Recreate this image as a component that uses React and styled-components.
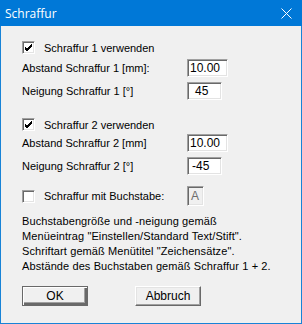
import React from "react";
import styled, { createGlobalStyle } from "styled-components";

const Global = createGlobalStyle`
  html, body { margin: 0; padding: 0; background: #f0f0f0; }
  body { width: 302px; height: 324px; overflow: hidden; }
`;

const Window = styled.div`
  width: 302px;
  height: 324px;
  box-sizing: border-box;
  border: 1px solid #1883d7;
  border-top: none;
  background: #f0f0f0;
  display: flex;
  flex-direction: column;
  font-family: "Liberation Sans", Arial, sans-serif;
  font-size: 11px;
  color: #000;
`;

const TitleBar = styled.div`
  height: 26px;
  margin: 0 -1px;
  background: #0078d7;
  display: flex;
  align-items: center;
  justify-content: space-between;
  padding: 0 10px 0 5px;
  color: #fff;
  font-family: "Open Sans", "Noto Sans", sans-serif;
  font-size: 12px;
`;

const Body = styled.div`
  display: flex;
  flex-direction: column;
  padding: 0 0 0 21px;
`;

const Row = styled.div`
  display: flex;
  align-items: center;
  height: ${(p) => p.h || 18}px;
  margin-top: ${(p) => p.mt || 0}px;
`;

const Label = styled.span`
  width: 165px;
  white-space: nowrap;
`;

const Box = styled.span`
  width: 13px;
  height: 13px;
  box-sizing: border-box;
  background: #fff;
  border-style: solid;
  border-width: 1px;
  border-color: #a0a0a0 #fff #fff #a0a0a0;
  box-shadow: inset 1px 1px 0 #696969, inset -1px -1px 0 #e3e3e3;
  display: flex;
  align-items: center;
  justify-content: center;
  margin-right: 9px;
`;

const CheckText = styled.span`
  width: 143px;
  white-space: nowrap;
`;

const Input = styled.span`
  width: ${(p) => p.w}px;
  height: ${(p) => p.hh || 18}px;
  box-sizing: border-box;
  background: ${(p) => (p.disabled ? "#f0f0f0" : "#fff")};
  color: ${(p) => (p.disabled ? "#6d6d6d" : "#000")};
  border-style: solid;
  border-width: 1px;
  border-color: #a0a0a0 #fff #fff #a0a0a0;
  box-shadow: inset 1px 1px 0 #696969, inset -1px -1px 0 #e3e3e3;
  display: flex;
  align-items: center;
  padding-left: ${(p) => p.pl || 3}px;
  font-size: 12px;
`;

const Note = styled.div`
  margin-top: 8px;
  line-height: 15px;
  white-space: nowrap;
  letter-spacing: 0.1px;
`;

const Buttons = styled.div`
  display: flex;
  gap: 47px;
  margin-top: 12px;
`;

const Button = styled.div`
  width: 66px;
  height: 20px;
  box-sizing: border-box;
  display: flex;
  align-items: center;
  justify-content: center;
  background: #f0f0f0;
  border-style: solid;
  border-width: 1px;
  border-color: ${(p) => (p.def ? "#696969" : "#fff #696969 #696969 #fff")};
  box-shadow: ${(p) =>
    p.def
      ? "inset 1px 1px 0 #fff, inset -2px -2px 0 #696969, inset -3px -3px 0 #a0a0a0"
      : "inset -1px -1px 0 #a0a0a0, inset 1px 1px 0 #e3e3e3"};
  font-size: 12px;
`;

const Check = () => (
  <svg width="9" height="9" viewBox="0 0 9 9">
    <path d="M1 4 L3 6 L8 1 M1 5 L3 7 L8 2 M1 6 L3 8 L8 3" stroke="#000" strokeWidth="1" fill="none" shapeRendering="crispEdges" />
  </svg>
);

const Close = () => (
  <svg width="11" height="11" viewBox="0 0 11 11">
    <path d="M0.5 0.5 L10.5 10.5 M10.5 0.5 L0.5 10.5" stroke="#fff" strokeWidth="1" />
  </svg>
);

export default function App() {
  return (
    <>
      <Global />
      <Window>
        <TitleBar>
          <span>Schraffur</span>
          <Close />
        </TitleBar>
        <Body>
          <Row h={13} mt={15}>
            <Box><Check /></Box>
            <span>Schraffur 1 verwenden</span>
          </Row>
          <Row mt={5}>
            <Label>Abstand Schraffur 1 [mm]:</Label>
            <Input w={41} pl={2}>10.00</Input>
          </Row>
          <Row mt={5}>
            <Label>Neigung Schraffur 1 [°]</Label>
            <Input w={35} pl={7}>45</Input>
          </Row>
          <Row h={13} mt={18}>
            <Box><Check /></Box>
            <span>Schraffur 2 verwenden</span>
          </Row>
          <Row mt={3}>
            <Label>Abstand Schraffur 2 [mm]</Label>
            <Input w={41} pl={2}>10.00</Input>
          </Row>
          <Row mt={5}>
            <Label>Neigung Schraffur 2 [°]</Label>
            <Input w={35} pl={4}>-45</Input>
          </Row>
          <Row h={20} mt={11}>
            <Box />
            <CheckText>Schraffur mit Buchstabe:</CheckText>
            <Input w={17} hh={20} pl={3} disabled>A</Input>
          </Row>
          <Note>
            Buchstabengröße und -neigung gemäß<br />
            Menüeintrag "Einstellen/Standard Text/Stift".<br />
            Schriftart gemäß Menütitel "Zeichensätze".<br />
            Abstände des Buchstaben gemäß Schraffur 1 + 2.
          </Note>
          <Buttons>
            <Button def>OK</Button>
            <Button>Abbruch</Button>
          </Buttons>
        </Body>
      </Window>
    </>
  );
}
